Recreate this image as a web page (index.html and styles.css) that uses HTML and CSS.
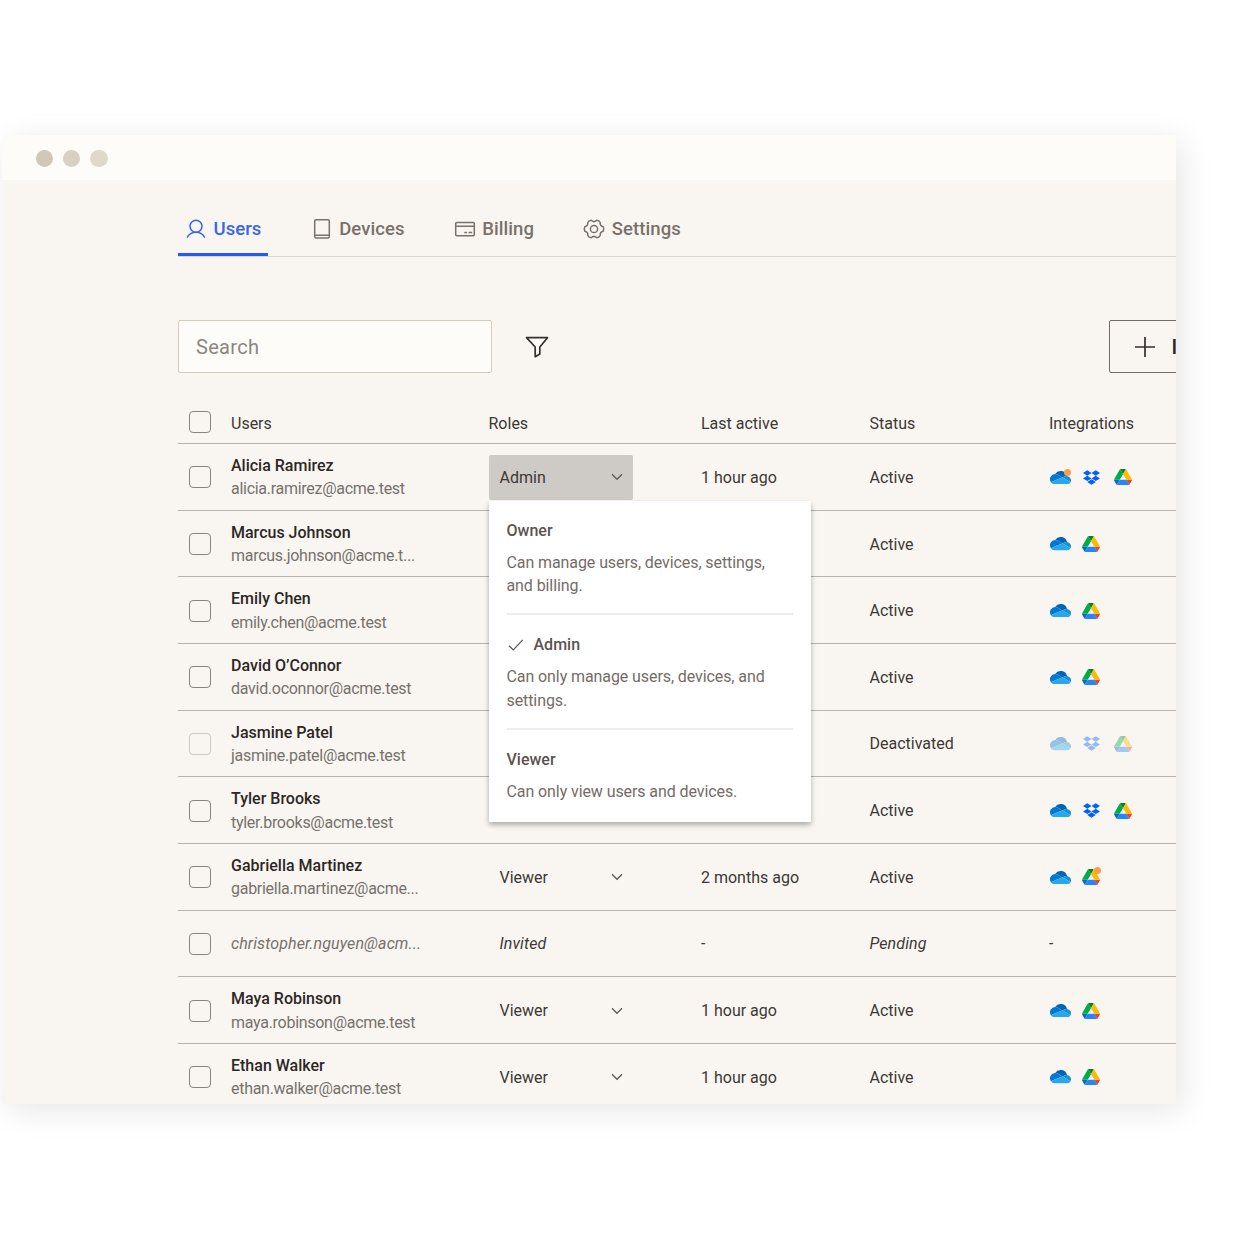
FILE: index.html
```
<!DOCTYPE html>
<html lang="en">
<head>
<meta charset="UTF-8" />
<title>Users</title>
<link rel="stylesheet" href="styles.css">
</head>
<body>

<!-- shared icons -->
<svg class="sprite" aria-hidden="true">
  <symbol id="onedrive" viewBox="0 5.5 32 20.5">
    <path fill="#0364b8" d="M12.202 11.193l.001-.001 6.717 4.024 4.003-1.685A6.477 6.477 0 0 1 25.5 13c.148 0 .294.007.439.016A10 10 0 0 0 7.898 10.003L8 10a7.96 7.96 0 0 1 4.202 1.193z"/>
    <path fill="#0078d4" d="M12.203 11.192A7.96 7.96 0 0 0 8 10l-.102.003a7.997 7.997 0 0 0-6.461 12.57l5.924-2.493 2.634-1.108 5.863-2.468 3.062-1.288z"/>
    <path fill="#1490df" d="M25.939 13.016A6.6 6.6 0 0 0 25.5 13a6.477 6.477 0 0 0-2.576.532l-4.004 1.684 1.161.695 3.805 2.279 1.66.994 5.676 3.4a6.5 6.5 0 0 0-5.283-9.568z"/>
    <path fill="#28a8ea" d="M25.546 19.184l-1.66-.994-3.805-2.279-1.161-.695-3.062 1.288-5.863 2.468-2.634 1.108-5.924 2.493A7.989 7.989 0 0 0 8 26h17.5a6.498 6.498 0 0 0 5.723-3.416z"/>
  </symbol>
  <symbol id="dropbox" viewBox="0 1.8 24 20.4">
    <path fill="#0061fe" d="M6 1.8L0 5.63l6 3.82 6-3.82zM18 1.8l-6 3.83 6 3.82 6-3.82zM0 13.27l6 3.83 6-3.83-6-3.82zM18 9.45l-6 3.82 6 3.83 6-3.83zM6 18.37l6 3.82 6-3.82-6-3.82z"/>
  </symbol>
  <symbol id="drive" viewBox="0 0 87.3 78">
    <path fill="#0066da" d="m6.6 66.85 3.85 6.65c.8 1.4 1.95 2.5 3.3 3.3l13.75-23.8h-27.5c0 1.55.4 3.1 1.2 4.5z"/>
    <path fill="#00ac47" d="m43.65 25-13.75-23.8c-1.35.8-2.5 1.9-3.3 3.3l-25.4 44a9.06 9.06 0 0 0-1.2 4.5h27.5z"/>
    <path fill="#ea4335" d="m73.55 76.8c1.35-.8 2.5-1.9 3.3-3.3l1.6-2.75 7.65-13.25c.8-1.4 1.2-2.95 1.2-4.5h-27.5l5.85 11.5z"/>
    <path fill="#00832d" d="m43.65 25 13.75-23.8c-1.35-.8-2.9-1.2-4.5-1.2h-18.5c-1.6 0-3.15.45-4.5 1.2z"/>
    <path fill="#2684fc" d="m59.8 53h-32.3l-13.75 23.8c1.35.8 2.9 1.2 4.5 1.2h50.8c1.6 0 3.15-.45 4.5-1.2z"/>
    <path fill="#ffba00" d="m73.4 26.5-12.7-22c-.8-1.4-1.95-2.5-3.3-3.3l-13.75 23.8 16.15 28h27.45c0-1.55-.4-3.1-1.2-4.5z"/>
  </symbol>
  <symbol id="chevron" viewBox="0 0 12 8">
    <path d="M1 1.3l5 5 5-5" fill="none" stroke="#5f5955" stroke-width="1.3"/>
  </symbol>
</svg>

<div class="window">
  <div class="titlebar"><span class="dot"></span><span class="dot"></span><span class="dot"></span></div>

  <div class="content">
    <nav class="tabs">
      <a class="tab selected">
        <svg viewBox="0 0 24 24"><circle cx="12" cy="9.2" r="6"/><path d="M3.1 20.6c1.6-3.2 4.8-5.4 8.9-5.4s7.2 2.2 8.8 5.4"/></svg>
        <span>Users</span>
      </a>
      <a class="tab">
        <svg viewBox="0 0 24 24"><rect x="4.7" y="2.7" width="14.6" height="18.4" rx="1.4"/><path d="M4.7 18.3h14.6"/></svg>
        <span>Devices</span>
      </a>
      <a class="tab">
        <svg viewBox="0 0 24 24"><rect x="2.7" y="5.5" width="18.6" height="13.2" rx="1"/><path d="M2.7 9.3h18.6M11.3 15.6h2.8M15.6 15.6h3.6"/></svg>
        <span>Billing</span>
      </a>
      <a class="tab">
        <svg viewBox="0 0 24 24"><circle cx="12" cy="12" r="3.6"/><path d="M9.3 3.3Q12 6 14.7 3.3Q17.2 3.3 18.2 5.5Q17.8 8.9 21.1 9.7Q22.4 12 21.1 14.3Q17.8 15.1 18.2 18.5Q17.2 20.7 14.7 20.7Q12 18 9.3 20.7Q6.8 20.7 5.8 18.5Q6.2 15.1 2.9 14.3Q1.6 12 2.9 9.7Q6.2 8.9 5.8 5.5Q6.8 3.3 9.3 3.3Z"/></svg>
        <span>Settings</span>
      </a>
    </nav>

    <div class="toolbar">
      <input class="search" type="text" placeholder="Search">
      <svg class="filter" viewBox="0 0 24 24"><path d="M1.5 2.7h21L14.8 12v6.9l-4.6 2.8V12z"/></svg>
      <button class="invite">
        <svg viewBox="0 0 20 20"><path d="M10 0v20M0 10h20"/></svg>
        <span>Invite</span>
      </button>
    </div>

    <div class="table">
      <div class="row head">
        <span class="check"></span><span>Users</span><span>Roles</span><span>Last active</span><span>Status</span><span>Integrations</span>
      </div>

      <div class="row">
        <span class="check"></span>
        <div class="user"><b>Alicia Ramirez</b><span>alicia.ramirez@acme.test</span></div>
        <div class="role open">
          <span>Admin</span><svg class="chevron"><use href="#chevron"/></svg>
          <div class="menu">
            <div class="option">
              <h4>Owner</h4>
              <p>Can manage users, devices, settings,<br>and billing.</p>
            </div>
            <div class="option">
              <h4><svg class="tick" viewBox="0 0 18 14"><path d="M2 7.8l4.3 4.2L15.7 1.8"/></svg>Admin</h4>
              <p>Can only manage users, devices, and<br>settings.</p>
            </div>
            <div class="option">
              <h4>Viewer</h4>
              <p>Can only view users and devices.</p>
            </div>
          </div>
        </div>
        <span>1 hour ago</span>
        <span>Active</span>
        <div class="apps"><i class="app alert"><svg class="onedrive"><use href="#onedrive"/></svg></i><i class="app"><svg class="dropbox"><use href="#dropbox"/></svg></i><i class="app"><svg class="drive"><use href="#drive"/></svg></i></div>
      </div>

      <div class="row">
        <span class="check"></span>
        <div class="user"><b>Marcus Johnson</b><span>marcus.johnson@acme.t...</span></div>
        <div class="role"></div>
        <span></span>
        <span>Active</span>
        <div class="apps"><i class="app"><svg class="onedrive"><use href="#onedrive"/></svg></i><i class="app"><svg class="drive"><use href="#drive"/></svg></i></div>
      </div>

      <div class="row">
        <span class="check"></span>
        <div class="user"><b>Emily Chen</b><span>emily.chen@acme.test</span></div>
        <div class="role"></div>
        <span></span>
        <span>Active</span>
        <div class="apps"><i class="app"><svg class="onedrive"><use href="#onedrive"/></svg></i><i class="app"><svg class="drive"><use href="#drive"/></svg></i></div>
      </div>

      <div class="row">
        <span class="check"></span>
        <div class="user"><b>David O’Connor</b><span>david.oconnor@acme.test</span></div>
        <div class="role"></div>
        <span></span>
        <span>Active</span>
        <div class="apps"><i class="app"><svg class="onedrive"><use href="#onedrive"/></svg></i><i class="app"><svg class="drive"><use href="#drive"/></svg></i></div>
      </div>

      <div class="row deactivated">
        <span class="check"></span>
        <div class="user"><b>Jasmine Patel</b><span>jasmine.patel@acme.test</span></div>
        <div class="role"></div>
        <span></span>
        <span>Deactivated</span>
        <div class="apps"><i class="app"><svg class="onedrive"><use href="#onedrive"/></svg></i><i class="app"><svg class="dropbox"><use href="#dropbox"/></svg></i><i class="app"><svg class="drive"><use href="#drive"/></svg></i></div>
      </div>

      <div class="row">
        <span class="check"></span>
        <div class="user"><b>Tyler Brooks</b><span>tyler.brooks@acme.test</span></div>
        <div class="role"></div>
        <span></span>
        <span>Active</span>
        <div class="apps"><i class="app"><svg class="onedrive"><use href="#onedrive"/></svg></i><i class="app"><svg class="dropbox"><use href="#dropbox"/></svg></i><i class="app"><svg class="drive"><use href="#drive"/></svg></i></div>
      </div>

      <div class="row">
        <span class="check"></span>
        <div class="user"><b>Gabriella Martinez</b><span>gabriella.martinez@acme...</span></div>
        <div class="role"><span>Viewer</span><svg class="chevron"><use href="#chevron"/></svg></div>
        <span>2 months ago</span>
        <span>Active</span>
        <div class="apps"><i class="app"><svg class="onedrive"><use href="#onedrive"/></svg></i><i class="app alert"><svg class="drive"><use href="#drive"/></svg></i></div>
      </div>

      <div class="row invited">
        <span class="check"></span>
        <div class="user"><span>christopher.nguyen@acm...</span></div>
        <div class="role"><span>Invited</span></div>
        <span>-</span>
        <span>Pending</span>
        <span>-</span>
      </div>

      <div class="row">
        <span class="check"></span>
        <div class="user"><b>Maya Robinson</b><span>maya.robinson@acme.test</span></div>
        <div class="role"><span>Viewer</span><svg class="chevron"><use href="#chevron"/></svg></div>
        <span>1 hour ago</span>
        <span>Active</span>
        <div class="apps"><i class="app"><svg class="onedrive"><use href="#onedrive"/></svg></i><i class="app"><svg class="drive"><use href="#drive"/></svg></i></div>
      </div>

      <div class="row">
        <span class="check"></span>
        <div class="user"><b>Ethan Walker</b><span>ethan.walker@acme.test</span></div>
        <div class="role"><span>Viewer</span><svg class="chevron"><use href="#chevron"/></svg></div>
        <span>1 hour ago</span>
        <span>Active</span>
        <div class="apps"><i class="app"><svg class="onedrive"><use href="#onedrive"/></svg></i><i class="app"><svg class="drive"><use href="#drive"/></svg></i></div>
      </div>
    </div>
  </div>
</div>

</body>
</html>
```

FILE: styles.css
```
* {
  box-sizing: border-box;
}
body {
  margin: 0;
  padding: 135px 0 0 2px;
  height: 1240px;
  background: #fff;
  color: #3d3835;
  font-family: Roboto, "Liberation Sans", sans-serif;
  font-size: 16px;
  overflow: hidden;
}
.sprite {
  display: none;
}
.window {
  width: 1174px;
  height: 969px;
  background: #f9f6f1;
  border-radius: 16px 0 0 4px;
  box-shadow: 6px 6px 32px rgba(0, 0, 0, 0.1);
  overflow: hidden;
}
.titlebar {
  display: flex;
  align-items: center;
  gap: 10px;
  height: 45px;
  padding: 2px 0 0 33.5px;
  background: #fdfcf8;
}
.dot {
  width: 17.4px;
  height: 17.4px;
  border-radius: 50%;
  background: #d1c8bb;
}
.dot:nth-child(2) {
  background: #d8d0c3;
}
.dot:nth-child(3) {
  background: #dfd9cb;
}
.content {
  width: 1150px;
  margin-left: 176px;
  padding-top: 22px;
}

/* tabs */
.tabs {
  display: flex;
  gap: 35.3px;
  height: 55px;
  border-bottom: 1px solid #d9d5cf;
}
.tab {
  display: flex;
  align-items: center;
  gap: 5.5px;
  height: 54px;
  padding: 2px 7px 0 6px;
  border-bottom: 3px solid transparent;
  color: #7a716b;
  font-size: 18.5px;
  font-weight: 500;
  letter-spacing: 0.06px;
}
.tab svg {
  width: 24px;
  height: 24px;
  fill: none;
  stroke: currentColor;
  stroke-width: 1.5;
}
.tab.selected {
  color: #3865f0;
  border-bottom-color: #2459f5;
}

/* search, filter, invite */
.toolbar {
  display: flex;
  align-items: center;
  height: 53px;
  margin-top: 63px;
}
.search {
  width: 314px;
  height: 53px;
  padding: 0 17px;
  border: 1px solid #d3cbbb;
  border-radius: 2px;
  background: #fdfcf8;
  font: inherit;
  font-size: 20px;
  letter-spacing: 0.3px;
}
.search::placeholder {
  color: #8c8680;
}
.filter {
  width: 24px;
  height: 24px;
  margin-left: 32.5px;
  fill: #fdfcf8;
  stroke: #352f2d;
  stroke-width: 1.7;
  stroke-linejoin: round;
}
.invite {
  display: flex;
  align-items: center;
  gap: 16.5px;
  width: 180px;
  height: 53px;
  margin-left: 560.5px;
  padding: 0 25px;
  border: 1px solid #746c67;
  border-radius: 2px;
  background: none;
  color: #292322;
  font: inherit;
  font-size: 20px;
  font-weight: 500;
  flex-shrink: 0;
}
.invite svg {
  width: 20px;
  height: 20px;
  stroke: #352f2d;
  stroke-width: 1.7;
}

/* users table */
.table {
  margin-top: 29px;
}
.row {
  display: grid;
  grid-template-columns: 53px 257.5px 212.5px 168.5px 179.5px 1fr;
  align-items: center;
  height: 66.65px;
  padding-top: 1px;
  border-bottom: 1px solid #b8b3ae;
}
.row:last-child {
  border-bottom: none;
  padding-top: 0;
}
.row.head {
  height: 42.1px;
}
.check {
  width: 22px;
  height: 22px;
  margin-left: 11px;
  border: 1px solid #8a8582;
  border-radius: 4px;
}
.head .check {
  margin-bottom: 3px;
}
.user {
  display: flex;
  flex-direction: column;
  line-height: 23.3px;
}
.user b {
  color: #2d2725;
  font-weight: 500;
}
.user span {
  color: #77716c;
  letter-spacing: -0.28px;
}
.role {
  position: relative;
  display: flex;
  align-items: center;
  justify-content: space-between;
  width: 144px;
  height: 45px;
  padding: 0 10px 0 11px;
  border-radius: 2px;
}
.role.open {
  background: #cecac5;
}
.chevron {
  width: 12px;
  height: 8px;
}
.apps {
  display: flex;
}
.app {
  position: relative;
  display: flex;
  align-items: center;
  justify-content: center;
  width: 22px;
  height: 18px;
  margin-right: 9.3px;
}
.onedrive {
  width: 21px;
  height: 13.5px;
}
.dropbox {
  width: 17px;
  height: 15px;
}
.drive {
  width: 18px;
  height: 16px;
}
/* orange badge on a connection that needs attention */
.app.alert::after {
  content: "";
  position: absolute;
  top: 1px;
  right: 0.5px;
  width: 7px;
  height: 7px;
  border-radius: 50%;
  background: #ff9b4a;
}
.app.alert:last-child::after {
  top: -1px;
  right: 1.5px;
}
.deactivated .check,
.deactivated .apps {
  opacity: 0.4;
}
.invited {
  font-style: italic;
}
.invited span {
  letter-spacing: 0.1px;
}

/* role menu */
.menu {
  position: absolute;
  z-index: 1;
  top: 46px;
  left: 0;
  width: 322px;
  height: 321px;
  padding: 0 18px;
  background: #fff;
  box-shadow: 0 3px 5px rgba(0, 0, 0, 0.3);
  color: #756c67;
}
.option {
  height: 114.3px;
  padding-top: 18px;
  border-bottom: 2px solid #ededed;
}
.option:last-child {
  border-bottom: none;
}
.option h4 {
  display: flex;
  align-items: center;
  gap: 9px;
  margin: 0 0 8px;
  color: #5c534f;
  font-size: 16px;
  font-weight: 500;
  line-height: 24px;
}
.option p {
  margin: 0;
  letter-spacing: -0.09px;
  line-height: 23.3px;
}
.tick {
  width: 18px;
  height: 14px;
  fill: none;
  stroke: #5c534f;
  stroke-width: 1.2;
}
```
